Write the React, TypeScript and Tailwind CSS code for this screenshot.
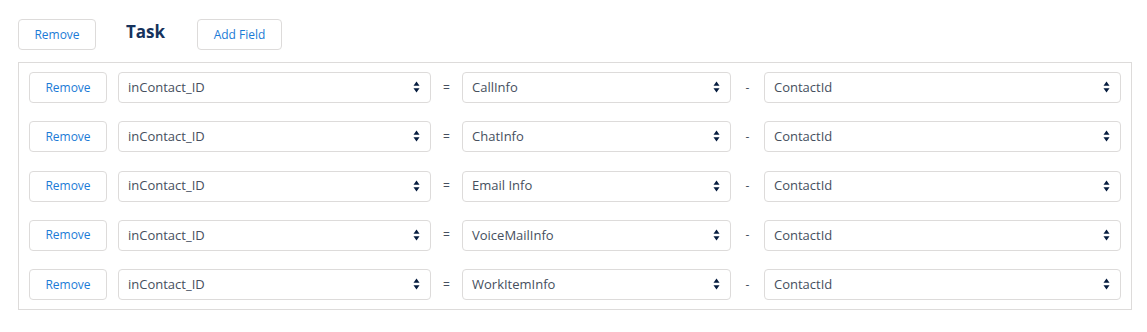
import React from "react";

const rows = ["CallInfo", "ChatInfo", "Email Info", "VoiceMailInfo", "WorkItemInfo"];

function Arrows() {
  return (
    <svg width="7" height="12" viewBox="0 0 7 12" className="shrink-0 -mt-[1px]">
      <path d="M3.5 0.5 L6.5 4.8 L0.5 4.8 Z" fill="#061c3f" />
      <path d="M3.5 11.5 L6.5 7.2 L0.5 7.2 Z" fill="#061c3f" />
    </svg>
  );
}

function Picker({ value, className }: { value: string; className: string }) {
  return (
    <div
      className={
        "h-[31px] flex items-center justify-between pl-[9px] pr-[10px] border border-[#dddbda] rounded-[4px] bg-white text-[13px] text-[#464f5e] " +
        className
      }
    >
      <span>{value}</span>
      <Arrows />
    </div>
  );
}

function RemoveButton() {
  return (
    <button className="w-[78px] h-[31px] shrink-0 border border-[#dddbda] rounded-[4px] bg-white text-[12px] text-[#1b7bd6]">
      Remove
    </button>
  );
}

export default function App() {
  return (
    <div
      className="w-[1147px] h-[332px] bg-white pt-[19px] pl-[18px] pr-[15px]"
      style={{ fontFamily: '"Open Sans", "Noto Sans", sans-serif' }}
    >
      {/* header */}
      <div className="flex items-center">
        <RemoveButton />
        <span className="ml-[30px] w-[71px] text-[17px] font-bold text-[#16325c] -mt-[6px]">Task</span>
        <button className="w-[85px] h-[31px] border border-[#dddbda] rounded-[4px] bg-white text-[12px] text-[#1b7bd6]">
          Add Field
        </button>
      </div>

      {/* fields */}
      <div className="mt-[12px] border border-[#dddbda] px-[10px] py-[9px] flex flex-col gap-[18.3px]">
        {rows.map((r) => (
          <div key={r} className="flex items-center">
            <RemoveButton />
            <Picker value="inContact_ID" className="ml-[11px] w-[313px]" />
            <span className="w-[31px] text-center text-[12px] text-[#464f5e]">=</span>
            <Picker value={r} className="w-[269px]" />
            <span className="w-[33px] text-center text-[12px] text-[#464f5e]">-</span>
            <Picker value="ContactId" className="flex-1" />
          </div>
        ))}
      </div>
    </div>
  );
}
